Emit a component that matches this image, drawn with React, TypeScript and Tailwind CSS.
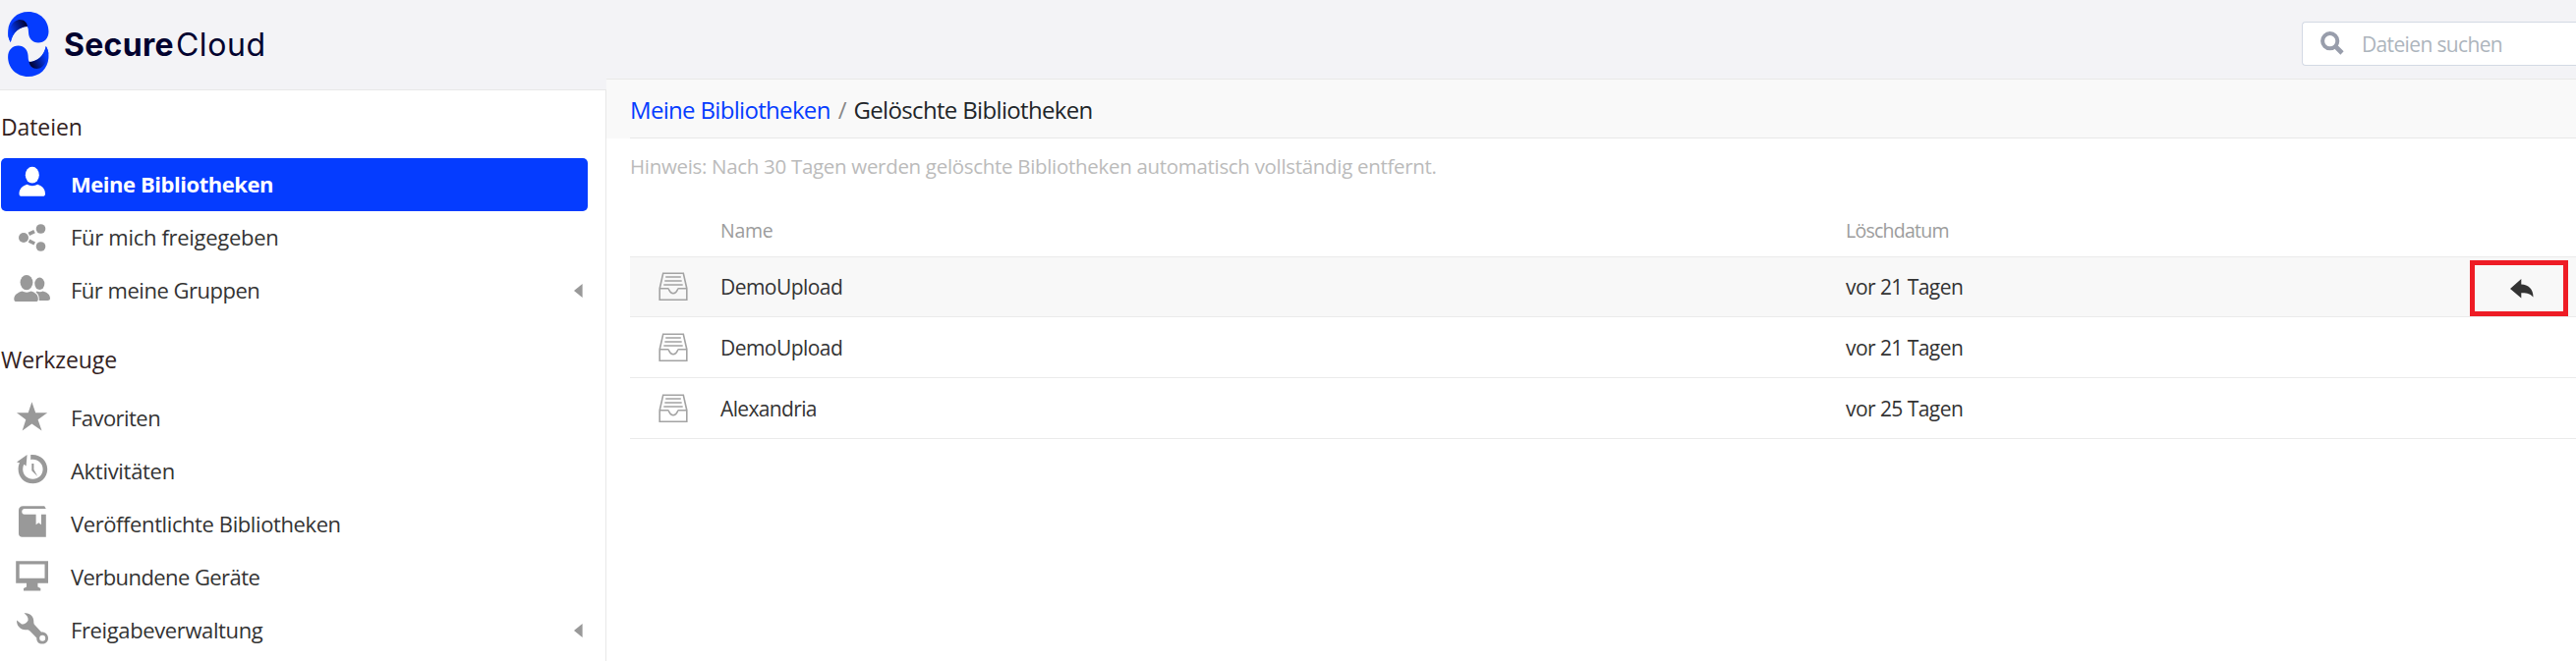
import React from "react";

const sans = "font-['Open_Sans','Noto_Sans',sans-serif]";

function Logo() {
  const body =
    "M10.8 43C8 38 8 34 8.2 31C9 20 17 12 29 12C41 12 49.5 21 49.5 32C49.5 39 45 43.5 39 43.5C33 43.5 29.2 39 29 33C28.8 30 28.9 28.5 27.6 27C20 27.2 12.8 33 10.8 43Z";
  const fold = "M8.3 36C9.5 28 13 21.2 18.5 20.2C24 19.6 27.6 22.5 28 27C20 27.2 12.8 33 10.8 43C9.4 40.5 8.5 38.5 8.3 36Z";
  return (
    <svg width="58" height="90" viewBox="0 0 58 90" className="shrink-0">
      <defs>
        <linearGradient id="fold" x1="9" y1="34" x2="28" y2="25" gradientUnits="userSpaceOnUse">
          <stop offset="0.1" stopColor="#053cff" />
          <stop offset="0.9" stopColor="#02063f" />
        </linearGradient>
      </defs>
      <path d={body} fill="#053cff" />
      <path d={fold} fill="url(#fold)" />
      <g transform="rotate(180 28.8 45)">
        <path d={body} fill="#053cff" />
        <path d={fold} fill="url(#fold)" />
      </g>
    </svg>
  );
}

const icons = {
  user: (
    <>
      <ellipse cx="32.8" cy="17.2" rx="7" ry="8.4" />
      <path d="M19.5 36.5C19.5 31.5 22.5 28.5 27.5 26.8C30.5 28.6 35.5 28.6 38.2 26.8C43.2 28.5 46 31.5 46 36.5C46 38.2 45 38.8 43.5 38.8H22C20.5 38.8 19.5 38.2 19.5 36.5Z" />
    </>
  ),
  share: (
    <>
      <circle cx="24" cy="27" r="5" />
      <circle cx="41.5" cy="18" r="4.8" />
      <circle cx="41.5" cy="36" r="4.8" />
      <path d="M29.3 23.4L35 20.6M29.5 30.2L35.2 33" stroke="#999" strokeWidth="3.6" fill="none" />
    </>
  ),
  group: (
    <>
      <ellipse cx="40.3" cy="19.8" rx="5" ry="6.2" />
      <path d="M37.5 27.5C40 28.6 42 28.4 43.5 27.5C48 28.6 51 31 51 34.8C51 36.3 50 37 48.5 37H39.8C39.8 33 39.5 31 36.5 28.5Z" />
      <ellipse cx="27" cy="18.6" rx="6.4" ry="7.6" />
      <path d="M14.3 35.5C14.3 31.5 17.5 29 22.5 27.5C25.5 29 29 29 31.5 27.5C36.5 29 38.8 31.5 38.8 35.5C38.8 37.4 38 38 36.5 38H16.8C15.2 38 14.3 37.4 14.3 35.5Z" />
    </>
  ),
  star: <path d="M32.4 10.2L36.2 21.2L48.2 21.3L38.6 28.3L42.5 39.6L32.4 32.6L22.7 39.4L26.3 28.3L17 21.3L28.7 21.2Z" />,
  history: (
    <>
      <path d="M31.2 10.1C40.5 9 48.2 15.8 48.2 24.7C48.2 33 41.6 39.3 33.4 39.3C25 39.3 18.6 33 18.6 24.7C18.6 22.3 19 20.2 20 18.2L17 17.4L27.6 10L26.6 21.6L24.4 19.8C23.6 21.3 23.2 22.9 23.2 24.7C23.2 30.5 27.7 34.7 33.4 34.7C39.1 34.7 43.6 30.4 43.6 24.7C43.6 18.6 38.2 13.8 31.2 14.9Z" />
      <path d="M32.3 19H34.4V25L38.2 32L32.3 26.3Z" />
    </>
  ),
  book: (
    <path d="M23.5 8.2H45.2L46.8 11H25C21.4 11 21.4 16.8 25 16.8H36.6V27.3L39.3 25.3L41.9 27.3V16.8H46.8V39.8H22.5C20.3 39.8 19 38.4 19 36.3V12.5C19 9.8 20.7 8.2 23.5 8.2Z" />
  ),
  monitor: (
    <path
      fillRule="evenodd"
      d="M16.2 10.2H49V32.8H38.4V36.4L41.3 38V40.4H24V38L27 36.4V32.8H16.2ZM19.7 13.4V27.8H45.5V13.4Z"
    />
  ),
  wrench: (
    <path
      fillRule="evenodd"
      d="M24.5 9.3C30 8.4 34.5 12.2 34.3 18C34.3 19.8 34.6 20.7 36 22L42 28.4C46 28.2 49 30.8 49 34.7C49 38.2 46.3 40.6 43 40.6C39.4 40.6 37 38 37.3 34.4L30.5 27.5C29.3 26.4 28.3 26 26.5 26.2C21 26.7 16.6 22.2 17.1 16.6L22 20.5C24.5 21 28.2 18.6 28.6 16.2C28.8 13.5 27.3 11.5 24.5 9.3ZM43.2 31.7A3 3 0 1 0 43.2 37.7A3 3 0 1 0 43.2 31.7Z"
    />
  ),
};

type ItemProps = { icon: keyof typeof icons; label: string; track: string; active?: boolean; caret?: boolean };

function NavItem({ icon, label, track, active, caret }: ItemProps) {
  return (
    <li
      className={`ml-px mr-[18px] flex h-[54px] items-center rounded-[5px] ${
        active ? "bg-[#053cff] font-bold text-white" : "text-[#333]"
      }`}
    >
      <svg width="60" height="54" viewBox="0 0 60 54" className={`-ml-px shrink-0 ${active ? "fill-white" : "fill-[#999]"}`}>
        {icons[icon]}
      </svg>
      <span className={`ml-[12px] flex-1 whitespace-nowrap pb-[2px] text-[22px] leading-[52px] ${track}`}>{label}</span>
      {caret && (
        <svg width="9" height="14" viewBox="0 0 9 14" className="mr-[5px] fill-[#999]">
          <path d="M0 7L8.6 0V14Z" />
        </svg>
      )}
    </li>
  );
}

function Tray() {
  return (
    <svg width="30" height="30" viewBox="0 0 30 30" fill="none" stroke="#a3a3a3" strokeWidth="1.6">
      <path d="M1.2 16.7L4.7 1.3H25.3L28.8 16.7V28.3H1.2ZM1.2 16.7H9.7C11 16.7 10.8 21.8 15 21.8C19.2 21.8 19 16.7 20.3 16.7H28.8" />
      <path d="M7.2 5H22.8M6.3 9H23.7M5.3 13H24.7" />
    </svg>
  );
}

const rows = [
  { name: "DemoUpload", track: "tracking-[-0.55px]", date: "vor 21 Tagen" },
  { name: "DemoUpload", track: "tracking-[-0.55px]", date: "vor 21 Tagen" },
  { name: "Alexandria", track: "tracking-[-0.65px]", date: "vor 25 Tagen" },
];

export default function App() {
  return (
    <div className={`flex h-[673px] w-full overflow-hidden bg-white ${sans}`}>
      <aside className="flex w-[617px] shrink-0 flex-col">
        <div className="flex h-[92px] shrink-0 border-b border-[#e8e8e8] bg-[#f3f3f6]">
          <Logo />
          <div className="ml-[7px] flex h-[91px] items-center font-['Inter',sans-serif] text-[32px] leading-none text-[#02022f]">
            <span className="font-bold tracking-[0.3px]">Secure</span>
            <span className="ml-[2px] tracking-[0.6px]">Cloud</span>
          </div>
        </div>
        <nav className="flex-1 border-r border-[#e8e8e8]">
          <h3 className="h-[69px] pl-px pt-[19px] text-[23px] leading-[36px] tracking-[-0.1px] text-[#322]">Dateien</h3>
          <ul>
            <NavItem icon="user" label="Meine Bibliotheken" track="tracking-[-0.45px]" active />
            <NavItem icon="share" label="Für mich freigegeben" track="tracking-[-0.3px]" />
            <NavItem icon="group" label="Für meine Gruppen" track="tracking-[-0.49px]" caret />
          </ul>
          <h3 className="h-[76px] pl-px pt-[25px] text-[23px] leading-[36px] tracking-[-0.1px] text-[#322]">Werkzeuge</h3>
          <ul>
            <NavItem icon="star" label="Favoriten" track="tracking-[-0.55px]" />
            <NavItem icon="history" label="Aktivitäten" track="tracking-[-0.3px]" />
            <NavItem icon="book" label="Veröffentlichte Bibliotheken" track="tracking-[-0.4px]" />
            <NavItem icon="monitor" label="Verbundene Geräte" track="tracking-[-0.58px]" />
            <NavItem icon="wrench" label="Freigabeverwaltung" track="tracking-[-0.38px]" caret />
          </ul>
        </nav>
      </aside>

      <main className="flex min-w-0 flex-1 flex-col">
        <header className="flex h-[81px] shrink-0 justify-end border-b border-[#e8e8e8] bg-[#f3f3f6]">
          <div className="mt-[22px] flex h-[45px] w-[279px] items-center rounded-l-[4px] border border-r-0 border-[#d3d9e4] bg-white">
            <svg width="24" height="24" viewBox="0 0 24 24" fill="none" stroke="#989dab" className="-mt-[2px] ml-[18px]">
              <circle cx="9.7" cy="9.7" r="7.6" strokeWidth="4" />
              <path d="M15.5 15.5L22 22" strokeWidth="4.6" />
            </svg>
            <span className="ml-[18px] whitespace-nowrap pt-[2px] text-[21px] tracking-[-0.65px] text-[#adb5bd]">Dateien suchen</span>
          </div>
        </header>

        <div className="h-[60px] shrink-0 bg-[#f9f9f9] pl-6">
          <div className="flex h-[60px] items-center whitespace-nowrap border-b border-[#e8e8e8] pt-[2px] text-[24px]">
            <a className="tracking-[-0.68px] text-[#053cff]">Meine Bibliotheken</a>
            <span className="ml-[8px] text-[#888]">/</span>
            <span className="ml-[7px] tracking-[-0.66px] text-[#212529]">Gelöschte Bibliotheken</span>
          </div>
        </div>

        <section className="pl-6">
          <p className="h-[71px] whitespace-nowrap pt-[13px] text-[20.5px] leading-[30px] tracking-[-0.31px] text-[#bbb]">
            Hinweis: Nach 30 Tagen werden gelöschte Bibliotheken automatisch vollständig entfernt.
          </p>
          <div className="flex h-[50px] items-center border-b border-[#ebebeb] pb-[3px] pl-[92px] text-[19.5px] text-[#9c9c9c]">
            <span className="w-[1145px] tracking-[-0.3px]">Name</span>
            <span className="tracking-[-0.75px]">Löschdatum</span>
          </div>
          {rows.map((row, i) => (
            <div
              key={i}
              className={`flex items-center border-b border-[#ebebeb] text-[21px] text-[#333] ${i === 0 ? "h-[61px] bg-[#f8f8f8]" : "h-[62px]"}`}
            >
              <div className="w-[92px] pl-[29px]">
                <Tray />
              </div>
              <span className={`w-[1145px] pt-[2px] ${row.track}`}>{row.name}</span>
              <span className="flex-1 pt-[2px] tracking-[-0.56px]">{row.date}</span>
              {i === 0 && (
                <button className="mr-2 mt-[3px] flex h-[57px] w-[100px] items-center justify-center self-start border-[5px] border-[#ee1c25]">
                  <svg width="24" height="20" viewBox="0 0 24 20" className="ml-[5px] fill-[#333]">
                    <path d="M0 10L11.3 0V5.4C18.5 5.6 23.5 10 23.5 18.5C20.5 15 17 14 11.3 14.2V19.6Z" />
                  </svg>
                </button>
              )}
            </div>
          ))}
        </section>
      </main>
    </div>
  );
}
